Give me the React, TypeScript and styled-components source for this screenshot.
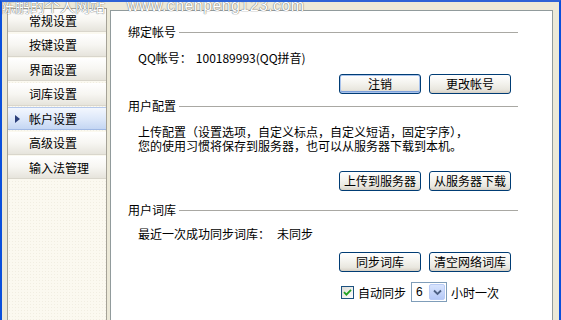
import React from "react";
import styled, { createGlobalStyle } from "styled-components";

const Global = createGlobalStyle`
  html, body { margin: 0; padding: 0; background: #ECE9D8; overflow: hidden; }
  body { font-family: "Noto Sans CJK SC", "Liberation Sans", sans-serif; font-size: 12px; color: #000; }
`;

const Window = styled.div`
  position: relative;
  width: 561px;
  height: 320px;
  box-sizing: border-box;
  border-top: 2px solid #2D62D6;
  border-left: 2px solid #0A4FDB;
  border-right: 2px solid #0A4FDB;
  background: #ECE9D8;
  display: flex;
  align-items: flex-start;
  overflow: hidden;
`;

const Sidebar = styled.div`
  margin: 6px 0 0 5px;
  width: 100px;
  height: 330px;
  box-sizing: border-box;
  border: 1px solid #A5A297;
  background-color: #FBF9F0;
  background-image: radial-gradient(#F1EEE2 0.6px, transparent 0.8px);
  background-size: 3px 3px;
  display: flex;
  flex-direction: column;
`;

const Item = styled.div<{ $active?: boolean }>`
  position: relative;
  height: 23px;
  margin-bottom: 1.5px;
  box-sizing: border-box;
  padding-left: 21px;
  display: flex;
  align-items: center;
  white-space: nowrap;
  font-size: 12px;
  background: ${(p) =>
    p.$active
      ? "linear-gradient(#F3F7FE, #DCE7F9 55%, #C4D6F3)"
      : "linear-gradient(#FFFFFF, #F7F6F2 50%, #E6E4DC)"};
  border-bottom: 1px solid ${(p) => (p.$active ? "#9FB8E4" : "#D9D6CC")};
  ${(p) => (p.$active ? "border-top: 1px solid #B5C9EC;" : "")}
`;

const Arrow = styled.span`
  position: absolute;
  left: 7px;
  top: 50%;
  margin-top: -4px;
  width: 0;
  height: 0;
  border-top: 4px solid transparent;
  border-bottom: 4px solid transparent;
  border-left: 5px solid #2B3F7A;
`;

const Panel = styled.div`
  margin: 8px 6px 0 3px;
  flex: 1;
  height: 330px;
  box-sizing: border-box;
  border: 1px solid #919B9C;
  background: #FFFFFF;
  padding: 14px 34px 0 17px;
  display: flex;
  flex-direction: column;
`;

const GroupHeader = styled.div<{ $gap: number }>`
  margin-top: ${(p) => p.$gap}px;
  height: 14px;
  line-height: 14px;
  display: flex;
  align-items: center;
  white-space: nowrap;
  &::after {
    content: "";
    flex: 1;
    height: 1px;
    margin-left: 3px;
    margin-top: 1px;
    background: #A9A8A3;
  }
`;

const Line = styled.div<{ $gap: number }>`
  margin-top: ${(p) => p.$gap}px;
  padding-left: 10px;
  height: 14px;
  line-height: 14px;
  display: flex;
  white-space: nowrap;
`;

const Value = styled.span<{ $gap: number }>`
  margin-left: ${(p) => p.$gap}px;
`;

const Desc = styled.div<{ $gap: number }>`
  margin-top: ${(p) => p.$gap}px;
  padding-left: 10px;
  line-height: 14px;
  white-space: nowrap;
`;

const Actions = styled.div<{ $gap: number }>`
  margin-top: ${(p) => p.$gap}px;
  margin-right: 7px;
  align-self: flex-end;
  width: 172px;
  display: flex;
  justify-content: space-between;
`;

const Button = styled.button<{ $default?: boolean }>`
  width: 82px;
  height: 20px;
  padding: 0;
  box-sizing: border-box;
  border: 1px solid #003C74;
  border-radius: 3px;
  font-family: "Noto Sans CJK SC", "Liberation Sans", sans-serif;
  font-size: 12px;
  line-height: 16px;
  color: #000;
  background: linear-gradient(#FFFFFF, #F4F3EE 45%, #E9E7DF 80%, #D6D0C5);
  box-shadow: ${(p) =>
    p.$default
      ? "inset 0 0 0 1px #A9C3EC, inset 0 -1px 0 1px #7EA1DB"
      : "inset 0 -1px 0 #D8D2C6"};
`;

const SyncRow = styled.div`
  margin-top: 10px;
  margin-right: 7px;
  align-self: flex-end;
  width: 172px;
  padding-left: 2px;
  box-sizing: border-box;
  display: flex;
  align-items: center;
  white-space: nowrap;
`;

const Check = styled.span`
  width: 13px;
  height: 13px;
  box-sizing: border-box;
  border: 1px solid #1C5180;
  background: linear-gradient(135deg, #DCDCD7, #FFFFFF);
  display: flex;
  align-items: center;
  justify-content: center;
`;

const CheckLabel = styled.span`
  margin-left: 4px;
`;

const Select = styled.div`
  margin-left: 5px;
  width: 36px;
  height: 20px;
  box-sizing: border-box;
  border: 1px solid #7F9DB9;
  background: #fff;
  display: flex;
  align-items: center;
  padding: 1px;
`;

const SelectText = styled.span`
  flex: 1;
  padding-left: 3px;
  font-family: "Liberation Sans", sans-serif;
  font-size: 12px;
`;

const DropBtn = styled.span`
  width: 16px;
  height: 16px;
  box-sizing: border-box;
  border-radius: 2px;
  border: 1px solid #BACCF6;
  background: linear-gradient(#D8E4FD, #B5C9F7);
  display: flex;
  align-items: center;
  justify-content: center;
`;

const After = styled.span`
  margin-left: 4px;
`;

const Watermark = styled.div`
  position: absolute;
  top: -3px;
  left: -2px;
  display: flex;
  font-family: "Noto Sans CJK SC", "Liberation Sans", sans-serif;
  font-size: 15px;
  line-height: 14px;
  color: #FFFFFF;
  text-shadow: 0 0 1px #6E6E6E, 0 0 1px #6E6E6E;
  pointer-events: none;
  white-space: nowrap;
`;

const WmUrl = styled.span`
  margin-left: 22px;
  font-family: "Liberation Sans", sans-serif;
  font-size: 16px;
  letter-spacing: 0.4px;
`;

const items = ["常规设置", "按键设置", "界面设置", "词库设置", "帐户设置", "高级设置", "输入法管理"];

export default function App() {
  return (
    <>
      <Global />
      <Window>
        <Sidebar>
          {items.map((t) => (
            <Item key={t} $active={t === "帐户设置"}>
              {t === "帐户设置" && <Arrow />}
              {t}
            </Item>
          ))}
        </Sidebar>
        <Panel>
          <GroupHeader $gap={0}>绑定帐号</GroupHeader>
          <Line $gap={12}>
            QQ帐号：<Value $gap={4}>100189993(QQ拼音)</Value>
          </Line>
          <Actions $gap={9}>
            <Button $default>注销</Button>
            <Button>更改帐号</Button>
          </Actions>
          <GroupHeader $gap={5}>用户配置</GroupHeader>
          <Desc $gap={12}>
            上传配置（设置选项，自定义标点，自定义短语，固定字序），
            <br />
            您的使用习惯将保存到服务器，也可以从服务器下载到本机。
          </Desc>
          <Actions $gap={18}>
            <Button>上传到服务器</Button>
            <Button>从服务器下载</Button>
          </Actions>
          <GroupHeader $gap={12}>用户词库</GroupHeader>
          <Line $gap={10}>
            最近一次成功同步词库：<Value $gap={7}>未同步</Value>
          </Line>
          <Actions $gap={11}>
            <Button>同步词库</Button>
            <Button>清空网络词库</Button>
          </Actions>
          <SyncRow>
            <Check>
              <svg width="9" height="9" viewBox="0 0 9 9">
                <path d="M1 4.2 L3.4 6.6 L8 1.8" fill="none" stroke="#21A121" strokeWidth="1.8" />
              </svg>
            </Check>
            <CheckLabel>自动同步</CheckLabel>
            <Select>
              <SelectText>6</SelectText>
              <DropBtn>
                <svg width="9" height="7" viewBox="0 0 9 7">
                  <path d="M1 1.5 L4.5 5 L8 1.5" fill="none" stroke="#4D6185" strokeWidth="1.8" />
                </svg>
              </DropBtn>
            </Select>
            <After>小时一次</After>
          </SyncRow>
        </Panel>
        <Watermark>
          <span>陈鹏的个人网站</span>
          <WmUrl>www.chenpeng123.com</WmUrl>
        </Watermark>
      </Window>
    </>
  );
}
